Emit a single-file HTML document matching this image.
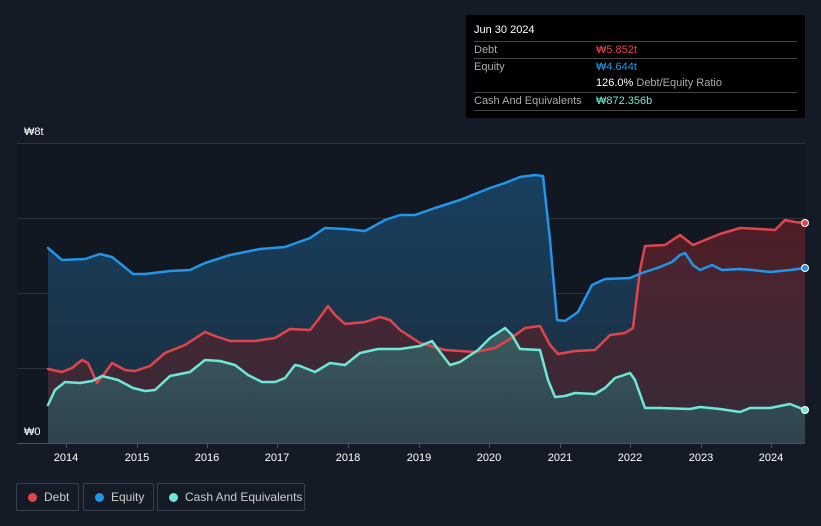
<!DOCTYPE html>
<html><head><meta charset="utf-8"><style>
body{margin:0;background:#151b26;font-family:"Liberation Sans",sans-serif;}
.wrap{position:relative;width:821px;height:526px;overflow:hidden;background:#151b26}
.tt{position:absolute;left:466px;top:15px;width:339px;height:103px;background:#000;border-radius:2px;color:#fff;font-size:11px}
.tt .r{position:absolute;left:8px;right:8px;border-top:1px solid #444;height:17px;line-height:17px;color:#aaa}
.tt .r span{position:absolute;left:122px}
.lg{position:absolute;top:483px;height:26px;border:1px solid #3a414d;border-radius:2px;color:#ccc;font-size:12px;line-height:26px}
.lg i{position:absolute;left:11px;top:9px;width:9px;height:9px;border-radius:50%}
.lg b{font-weight:normal;position:absolute;left:27px}
.ax{position:absolute;color:#fff;font-size:11px}
</style></head><body><div class="wrap">
<svg width="821" height="526" style="position:absolute;left:0;top:0">
<defs>
<linearGradient id="ge" x1="0" y1="0" x2="0" y2="1"><stop offset="0" stop-color="#17405f"/><stop offset="1" stop-color="#1c2c3c"/></linearGradient>
<linearGradient id="gd" x1="0" y1="0" x2="0" y2="1"><stop offset="0" stop-color="#5a1f27"/><stop offset="1" stop-color="#3a2a38"/></linearGradient>
<linearGradient id="gc" x1="0" y1="0" x2="0" y2="1"><stop offset="0" stop-color="#3b5a5e"/><stop offset="1" stop-color="#30424c"/></linearGradient>
</defs>
<rect x="17" y="143" width="788" height="300" fill="#121822"/>
<g stroke="#2c333e" stroke-width="1">
<line x1="17" y1="143.5" x2="805" y2="143.5"/><line x1="17" y1="218.5" x2="805" y2="218.5"/><line x1="17" y1="293.5" x2="805" y2="293.5"/><line x1="17" y1="368.5" x2="805" y2="368.5"/>
</g>
<polygon fill="url(#ge)" points="48,443 48,248 62,260 85,259 100,254 112,257 122,265 133,274 145,274 170,271 190,270 205,263 230,255 260,249 285,247 310,238 325,228 345,229 365,231 385,220 400,215 415,215 435,208 460,200 490,188 505,183 520,177 535,175 543,176 550,240 557,320 565,321 578,312 592,285 605,279 630,278 642,273 660,267 672,262 680,255 685,253 693,265 700,270 712,265 722,270 740,269 752,270 770,272 790,270 805,268 805,443"/>
<polygon fill="url(#gd)" opacity="0.85" points="48,443 48,369 62,372 72,368 82,360 88,363 97,383 105,373 112,363 125,370 135,371 150,366 165,353 185,345 205,332 215,336 230,341 255,341 275,338 290,329 310,330 318,320 328,306 335,315 345,324 365,322 380,317 390,320 400,330 420,343 445,350 475,352 495,348 510,339 525,328 540,326 550,345 558,354 575,351 595,350 610,335 625,333 633,328 640,270 645,246 665,245 680,235 693,245 705,240 720,234 740,228 760,229 775,230 785,220 795,222 805,223 805,443"/>
<polygon fill="url(#gc)" points="48,443 48,405 55,390 65,382 80,383 92,381 102,376 118,380 133,388 145,391 155,390 170,376 190,372 205,360 220,361 235,365 248,375 262,382 275,382 285,378 295,365 300,366 315,372 330,363 345,365 360,353 378,349 400,349 420,346 432,341 440,352 450,365 460,362 478,350 490,338 505,328 512,335 520,349 540,350 548,380 555,397 565,396 575,393 595,394 605,388 615,378 630,373 635,380 645,408 660,408 690,409 700,407 720,409 740,412 750,408 770,408 790,404 805,410 805,443"/>
<g fill="none" stroke-width="2.5" stroke-linejoin="round" stroke-linecap="round">
<polyline stroke="#e0454f" points="48,369 62,372 72,368 82,360 88,363 97,383 105,373 112,363 125,370 135,371 150,366 165,353 185,345 205,332 215,336 230,341 255,341 275,338 290,329 310,330 318,320 328,306 335,315 345,324 365,322 380,317 390,320 400,330 420,343 445,350 475,352 495,348 510,339 525,328 540,326 550,345 558,354 575,351 595,350 610,335 625,333 633,328 640,270 645,246 665,245 680,235 693,245 705,240 720,234 740,228 760,229 775,230 785,220 795,222 805,223"/>
<polyline stroke="#2394e6" points="48,248 62,260 85,259 100,254 112,257 122,265 133,274 145,274 170,271 190,270 205,263 230,255 260,249 285,247 310,238 325,228 345,229 365,231 385,220 400,215 415,215 435,208 460,200 490,188 505,183 520,177 535,175 543,176 550,240 557,320 565,321 578,312 592,285 605,279 630,278 642,273 660,267 672,262 680,255 685,253 693,265 700,270 712,265 722,270 740,269 752,270 770,272 790,270 805,268"/>
<polyline stroke="#6ee7d5" points="48,405 55,390 65,382 80,383 92,381 102,376 118,380 133,388 145,391 155,390 170,376 190,372 205,360 220,361 235,365 248,375 262,382 275,382 285,378 295,365 300,366 315,372 330,363 345,365 360,353 378,349 400,349 420,346 432,341 440,352 450,365 460,362 478,350 490,338 505,328 512,335 520,349 540,350 548,380 555,397 565,396 575,393 595,394 605,388 615,378 630,373 635,380 645,408 660,408 690,409 700,407 720,409 740,412 750,408 770,408 790,404 805,410"/>
</g>
<circle cx="805" cy="223" r="3.5" fill="#e0454f" stroke="#fff" stroke-width="1"/>
<circle cx="805" cy="268" r="3.5" fill="#2394e6" stroke="#fff" stroke-width="1"/>
<circle cx="805" cy="410" r="3.5" fill="#6ee7d5" stroke="#fff" stroke-width="1"/>
<rect x="17" y="425" width="31" height="17" fill="#121822"/>
<line x1="17" y1="443.5" x2="805" y2="443.5" stroke="#4a515c"/>
<g stroke="#4a515c"><line x1="66.5" y1="444" x2="66.5" y2="448"/><line x1="137.5" y1="444" x2="137.5" y2="448"/><line x1="207.5" y1="444" x2="207.5" y2="448"/><line x1="277.5" y1="444" x2="277.5" y2="448"/><line x1="348.5" y1="444" x2="348.5" y2="448"/><line x1="419.5" y1="444" x2="419.5" y2="448"/><line x1="489.5" y1="444" x2="489.5" y2="448"/><line x1="560.5" y1="444" x2="560.5" y2="448"/><line x1="630.5" y1="444" x2="630.5" y2="448"/><line x1="701.5" y1="444" x2="701.5" y2="448"/><line x1="771.5" y1="444" x2="771.5" y2="448"/></g>
<g fill="#fff" font-size="11" font-family="Liberation Sans" text-anchor="middle">
<text x="66" y="461">2014</text><text x="137" y="461">2015</text><text x="207" y="461">2016</text><text x="277" y="461">2017</text><text x="348" y="461">2018</text><text x="419" y="461">2019</text><text x="489" y="461">2020</text><text x="560" y="461">2021</text><text x="630" y="461">2022</text><text x="701" y="461">2023</text><text x="771" y="461">2024</text>
</g>
<text x="24" y="135" fill="#fff" font-size="11" font-family="Liberation Sans">₩8t</text>
<text x="24" y="435" fill="#fff" font-size="11" font-family="Liberation Sans">₩0</text>
</svg>
<div class="tt">
<div style="position:absolute;left:8px;top:9px;color:#fff;font-size:11px">Jun 30 2024</div>
<div class="r" style="top:26px">Debt<span style="color:#e0454f">₩5.852t</span></div>
<div class="r" style="top:43px">Equity<span style="color:#2394e6">₩4.644t</span></div>
<div class="r" style="top:60px;border-top:none"><span style="color:#fff">126.0% <em style="font-style:normal;color:#aaa">Debt/Equity Ratio</em></span></div>
<div class="r" style="top:77px">Cash And Equivalents<span style="color:#6ee7d5">₩872.356b</span></div>
<div class="r" style="top:95px;height:0"></div>
</div>
<div class="lg" style="left:16px;width:61px"><i style="background:#e0454f"></i><b>Debt</b></div>
<div class="lg" style="left:83px;width:69px"><i style="background:#2394e6"></i><b>Equity</b></div>
<div class="lg" style="left:157px;width:146px"><i style="background:#6ee7d5"></i><b>Cash And Equivalents</b></div>
</div></body></html>
